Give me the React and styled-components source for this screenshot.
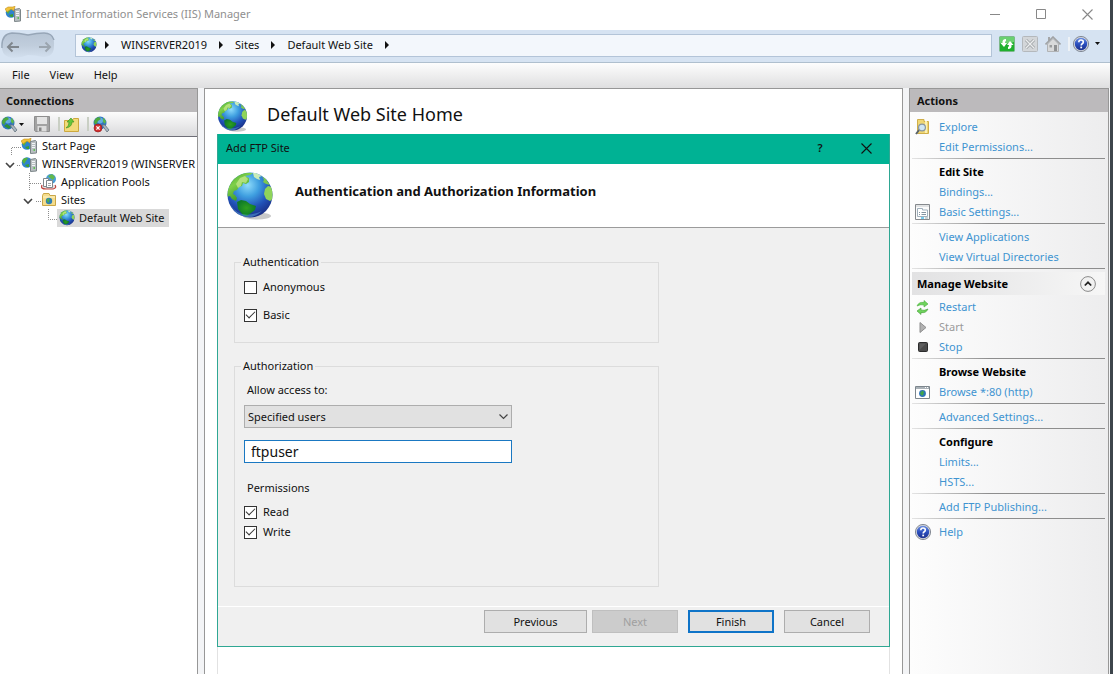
import React, { useId, useState } from "react";
import styled, { createGlobalStyle, css } from "styled-components";

const GlobalStyle = createGlobalStyle`
  *, *::before, *::after { box-sizing: border-box; }
  body { margin: 0; background: #f3f4f6; }
  body, button, input, select {
    font-family: "Noto Sans", "Open Sans", sans-serif;
    font-size: 11px;
    line-height: 16px;
    color: #111;
  }
  svg { display: block; flex: none; }
`;

/* ---------- drawings ---------- */

function Globe({ size = 16, shadow = false }) {
  const id = useId();
  return (
    <svg width={size} height={size} viewBox="0 0 48 48" aria-hidden="true">
      <defs>
        <radialGradient id={`${id}s`} cx="0.45" cy="0.28" r="0.72">
          <stop offset="0" stopColor="#8fdcfb" />
          <stop offset="0.35" stopColor="#3f9fe0" />
          <stop offset="0.7" stopColor="#2152b8" />
          <stop offset="1" stopColor="#1a2f86" />
        </radialGradient>
        <linearGradient id={`${id}g`} x1="0" y1="0" x2="0.6" y2="1">
          <stop offset="0" stopColor="#3c9c2c" />
          <stop offset="0.45" stopColor="#7fd04a" />
          <stop offset="1" stopColor="#2c8f22" />
        </linearGradient>
        <radialGradient id={`${id}b`}>
          <stop offset="0" stopColor="#2fa01f" />
          <stop offset="1" stopColor="#0f7a2a" />
        </radialGradient>
        <clipPath id={`${id}c`}><circle cx="24" cy="23" r="22.5" /></clipPath>
      </defs>
      {shadow && <ellipse cx="31" cy="44" rx="14" ry="3.5" fill="#777" opacity="0.4" />}
      <circle cx="24" cy="23" r="22.5" fill={`url(#${id}s)`} />
      <g clipPath={`url(#${id}c)`}>
        <path d="M0 25 L0 10 L14 0 L27 1 L24 3 L19 4 L23 6 L23 10 L20 12 L17 11 L16 14 L13 15 L11 18 L8 19 L7 22 L9 23 L11 26 L10 29 L6 27 L4 24 Z" fill={`url(#${id}g)`} />
        <path d="M14 6 L19 4 L22 7 L20 11 L16 10 L15 14 L12 16 L10 12 Z" fill="#c4e88c" opacity="0.75" />
        <path d="M27 1 L31 1 L36 4 L33 5 L34 8 L31 7 L28 5 Z" fill="#c8ecb8" />
        <path d="M36 4 L40 7 L44 13 L40 12 L37 10 L38 8 Z" fill="#7ec850" />
        <path d="M42 14 L46 15 L48 26 L44 29 L40 27 L38 22 L39 17 Z" fill="#8fd45a" />
        <path d="M11 30 L15 28 L20 29 L24 32 L30 34 L29 38 L25 41 L21 44 L17 43 L12 37 Z" fill={`url(#${id}b)`} />
        <path d="M4 32 Q14 49 36 39 Q27 47 18 46 Q8 41 4 32Z" fill="#78d8ff" opacity="0.35" />
      </g>
    </svg>
  );
}

function ServerGlobe({ star = false }) {
  return (
    <svg width="17" height="16" viewBox="0 0 17 16" aria-hidden="true">
      <circle cx="6" cy="6.5" r="5.3" fill="#2f83cf" />
      <path d="M1 5 Q3 1 7 2 L5 5 L3 8 Z" fill="#56b33e" />
      <path d="M4 9 L8 8 L8 11 L6 11 Z" fill="#3d9e33" />
      {star && <path d="M0 3 L3 1 L8 1 L10 0 L9 5 L6 3 L2 6 Z" fill="#f2c23a" stroke="#c4901f" strokeWidth="0.6" />}
      <path d="M9.5 3.5 L14.5 2.5 L15.5 3.5 V15 L9.5 15.5 Z" fill="#b9bfc2" stroke="#7c8588" />
      <path d="M11 5.5 H14 M11 7.5 H14 M11 9.5 H14" stroke="#f4f6f7" />
      <path d="M12.5 12 H14" stroke="#43c133" strokeWidth="1.5" />
    </svg>
  );
}

const AppPoolsIcon = () => (
  <svg width="16" height="16" viewBox="0 0 16 16" aria-hidden="true">
    <circle cx="10" cy="5" r="5" fill="#4a9fd8" />
    <path d="M7 2 L11 0 L14 3 L12 6 L9 4 Z" fill="#63b84c" />
    <path d="M1 11 Q-1 15 5 15 L12 15 Q16 14 14 11" fill="#e9e3e3" stroke="#c0453f" strokeWidth="1.2" />
    <path d="M2.5 4.5 H7.5 V12.5 H2.5 Z" fill="#fff" stroke="#80878c" />
    <path d="M5.5 6.5 H11.5 V13.5 H5.5 Z" fill="#fff" stroke="#80878c" />
    <path d="M7 9.5 H10 M7 11.5 H10" stroke="#a0a8ad" />
  </svg>
);

const SitesIcon = () => (
  <svg width="16" height="16" viewBox="0 0 16 16" aria-hidden="true">
    <path d="M1.5 3.5 L2.5 1.5 H8 L9 3.5 H14.5 V13.5 H1.5 Z" fill="#f4dc8c" stroke="#c9a646" />
    <path d="M2 5 H14" stroke="#fdf3c6" />
    <circle cx="8" cy="9" r="3.2" fill="#2f7fb5" />
    <path d="M5.5 8 L8 6 L8.5 9 L7 11 Z" fill="#4db04a" />
  </svg>
);

const ConnectIcon = ({ off = false }) => (
  <svg width="17" height="17" viewBox="0 0 17 17" aria-hidden="true">
    <circle cx="7" cy="7" r="6.5" fill="#2f74c4" />
    <circle cx="7" cy="4.5" r="3" fill="#7cc6ee" opacity="0.7" />
    <path d="M1 7 Q1 2 6 1 L8 3 L5 5 L3 9 Z" fill="#4ba83c" />
    <path d="M10 1.5 L13 5 L12 8 L10 6 Z" fill="#5cb848" />
    <path d="M9 9 L12 9 L16 14 L14 16 Z" fill="#aab6c0" stroke="#66747f" strokeWidth="0.8" />
    {off ? (
      <>
        <circle cx="5" cy="12" r="4" fill="#d22f2f" stroke="#8d1717" strokeWidth="0.6" />
        <path d="M3.4 10.4 L6.6 13.6 M6.6 10.4 L3.4 13.6" stroke="#fff" strokeWidth="1.3" />
      </>
    ) : (
      <path d="M3 10 L6 8 L10 11 L8 13 Z" fill="#2c8f38" />
    )}
  </svg>
);

const SaveIcon = () => (
  <svg width="16" height="16" viewBox="0 0 16 16" aria-hidden="true">
    <path d="M0.5 0.5 H15.5 V15.5 H1.5 L0.5 14.5 Z" fill="#a2a2a2" stroke="#8e8e8e" />
    <path d="M3 1 H13 V8 H3 Z" fill="#e4e4e4" />
    <path d="M3.5 10 H12.5 V15.5 H3.5 Z" fill="#dcdcdc" />
    <path d="M5 11.5 H7.5 V15 H5 Z" fill="#868686" />
  </svg>
);

const FolderUpIcon = () => (
  <svg width="15" height="15" viewBox="0 0 15 15" aria-hidden="true">
    <path d="M0.5 3.5 H8 L9.5 1.5 H14.5 V14.5 H0.5 Z" fill="#f3da7a" stroke="#cda83e" />
    <path d="M2 11 Q5 9 5 5 L3 5 L7 1 L10 5 L8 5 Q8 10 2 11Z" fill="#67c63a" stroke="#3b8f1d" strokeWidth="0.6" />
  </svg>
);

const ExploreIcon = () => (
  <svg width="15" height="16" viewBox="0 0 15 16" aria-hidden="true">
    <path d="M2.5 0.5 H9 V2.5 H13.5 V14.5 H2.5 Z" fill="#f0d774" stroke="#cfae4a" />
    <path d="M11 2 V14" stroke="#fbf0b4" strokeWidth="2" />
    <path d="M1 15 L4.5 10.5" stroke="#59636b" strokeWidth="2" />
    <circle cx="7" cy="8.5" r="3.4" fill="#cfe6f5" stroke="#8794a0" strokeWidth="1.2" />
  </svg>
);

const SettingsIcon = () => (
  <svg width="15" height="16" viewBox="0 0 15 16" aria-hidden="true">
    <path d="M0.5 0.5 H14.5 V15.5 H0.5 Z" fill="#fbfbfb" stroke="#85898d" />
    <path d="M1 2 H14" stroke="#c6cacd" />
    <path d="M2.5 4.5 H7.5 V6 H12.5 V12.5 H2.5 Z" fill="#fff" stroke="#a0b0bc" />
    <path d="M4 8.5 H5 M6.5 8.5 H11 M4 10.5 H5 M6.5 10.5 H11" stroke="#8494a0" />
    <path d="M6 14 H9" stroke="#3fb8e8" strokeWidth="1.4" />
    <path d="M10 14 H13" stroke="#9aa" />
  </svg>
);

const RestartIcon = () => (
  <svg width="13" height="15" viewBox="0 0 13 15" aria-hidden="true">
    <path d="M1 6 Q3 1.5 8 2.5 L8 0.5 L12 4 L8 7 L8 5 Q5 4 1 6Z" fill="#6fd45c" stroke="#4dae40" strokeWidth="0.6" />
    <path d="M12 9 Q10 13.5 5 12.5 L5 14.5 L1 11 L5 8 L5 10 Q8 11 12 9Z" fill="#6fd45c" stroke="#3f9c34" strokeWidth="0.6" />
  </svg>
);

const StartIcon = () => (
  <svg width="8" height="11" viewBox="0 0 8 11" aria-hidden="true">
    <path d="M1 0.5 L7 5.5 L1 10.5 Z" fill="#b2b2b2" stroke="#8e8e8e" />
  </svg>
);

const StopIcon = () => (
  <svg width="10" height="10" viewBox="0 0 10 10" aria-hidden="true">
    <rect x="0.5" y="0.5" width="9" height="9" rx="1" fill="#4b4b4b" stroke="#2c2c2c" />
    <path d="M1.5 8 L8 1.5 H1.5 Z" fill="#6a6a6a" opacity="0.6" />
  </svg>
);

const BrowseIcon = () => (
  <svg width="15" height="13" viewBox="0 0 15 13" aria-hidden="true">
    <path d="M0.5 0.5 H14.5 V12.5 H0.5 Z" fill="#fff" stroke="#7d868d" />
    <path d="M1 2 H14" stroke="#a9b1b7" strokeWidth="2" />
    <path d="M10 1.5 H11 M12 1.5 H13" stroke="#fff" />
    <circle cx="7.5" cy="7.5" r="3.4" fill="#2b72b8" />
    <path d="M5 7 L7.5 4.5 L9 6 L8 9.5 L6 9 Z" fill="#3fa54a" />
  </svg>
);

function HelpIcon() {
  const id = useId();
  return (
    <svg width="16" height="16" viewBox="0 0 16 16" aria-hidden="true">
      <defs>
        <linearGradient id={id} x1="0" y1="0" x2="0" y2="1">
          <stop offset="0" stopColor="#6d8fe0" />
          <stop offset="0.5" stopColor="#2a4fc0" />
          <stop offset="1" stopColor="#1b2f8c" />
        </linearGradient>
      </defs>
      <circle cx="8" cy="8" r="7.6" fill="#d4d8de" stroke="#6d7480" strokeWidth="0.8" />
      <circle cx="8" cy="8" r="6.2" fill={`url(#${id})`} />
      <path d="M5.8 6.2 Q5.8 4 8 4 Q10.3 4 10.3 6 Q10.3 7.1 9.2 7.8 Q8.2 8.4 8.2 9.4" fill="none" stroke="#fff" strokeWidth="1.6" />
      <rect x="7.3" y="10.6" width="1.8" height="1.7" fill="#fff" />
    </svg>
  );
}

const RefreshIcon = () => (
  <svg width="16" height="16" viewBox="0 0 16 16" aria-hidden="true">
    <rect x="0.5" y="0.5" width="15" height="15" rx="1" fill="#1fb02f" stroke="#7db88a" />
    <path d="M1 1 H15 V6 Q8 9 1 7 Z" fill="#9be89c" opacity="0.6" />
    <path d="M7 3 Q3 3 3.5 7 H1.5 L5 11 L8 7 H6 Q6 5 7 5 Z" fill="#fff" />
    <path d="M9 13 Q13 13 12.5 9 H14.5 L11 5 L8 9 H10 Q10 11 9 11 Z" fill="#fff" />
  </svg>
);

const StopLoadIcon = () => (
  <svg width="16" height="16" viewBox="0 0 16 16" aria-hidden="true">
    <rect x="0.5" y="0.5" width="15" height="15" rx="1" fill="#d3d6d9" stroke="#b4b8bc" />
    <path d="M4 4 L12 12 M12 4 L4 12" stroke="#9da1a5" strokeWidth="3" />
    <path d="M4 4 L12 12 M12 4 L4 12" stroke="#eceeef" strokeWidth="1.4" />
  </svg>
);

const HomeIcon = () => (
  <svg width="16" height="16" viewBox="0 0 16 16" aria-hidden="true">
    <path d="M3 1 H5 V4 L3 6 Z" fill="#a4a6a8" />
    <path d="M2.5 8 L8 2.5 L13.5 8 V15.5 H2.5 Z" fill="#d8d9da" stroke="#b1b3b5" />
    <path d="M0.5 8.5 L8 1 L15.5 8.5" fill="none" stroke="#a1a3a5" strokeWidth="1.6" />
    <path d="M9 9 H12 V15 H9 Z" fill="#8f9193" />
    <path d="M4.5 9 H7 V11.5 H4.5 Z" fill="#9a9c9e" />
  </svg>
);

function NavArrows() {
  const id = useId();
  return (
    <svg width="54" height="28" viewBox="0 0 54 28" aria-hidden="true">
      <defs>
        <linearGradient id={id} x1="0" y1="0" x2="0" y2="1">
          <stop offset="0" stopColor="#b7c5d5" />
          <stop offset="0.5" stopColor="#c0cddc" />
          <stop offset="1" stopColor="#d3e0ef" />
        </linearGradient>
      </defs>
      <path d="M1 18 Q0 3 11 2 Q18 2 27 4 Q36 2 43 2 Q54 3 53 15 Q53 26 42 26 Q34 24 27 24 Q20 27 12 27 Q2 26 1 18Z" fill={`url(#${id})`} />
      <path d="M1 17 Q0 3 11 2 Q18 2 27 4 Q36 2 43 2 Q51 2 53 9" fill="none" stroke="#97a6b7" strokeWidth="1.4" />
      <path d="M18 16 H7 M11.5 11.5 L7 16 L11.5 20.5" fill="none" stroke="#7f868d" strokeWidth="2" />
      <path d="M38 16 H49 M44.5 11.5 L49 16 L44.5 20.5" fill="none" stroke="#9ba5af" strokeWidth="2" />
    </svg>
  );
}

const CrumbArrow = () => (
  <svg width="4" height="8" viewBox="0 0 4 8" aria-hidden="true"><path d="M0 0 L4 4 L0 8 Z" fill="#111" /></svg>
);
const Caret = () => (
  <svg width="5" height="3" viewBox="0 0 5 3" aria-hidden="true"><path d="M0 0 H5 L2.5 3 Z" fill="#111" /></svg>
);
const Cross = ({ color = "#888" }) => (
  <svg width="11" height="11" viewBox="0 0 11 11" aria-hidden="true">
    <path d="M0.5 0.5 L10.5 10.5 M10.5 0.5 L0.5 10.5" stroke={color} strokeWidth="1.1" />
  </svg>
);

/* ---------- window frame ---------- */

const Frame = styled.div`
  min-height: 100vh;
  display: flex;
  flex-direction: column;
  border-right: 3px solid #3d454b;
  background: #f3f4f6;
`;

const TitleBar = styled.header`
  height: 30px;
  display: flex;
  align-items: center;
  padding: 0 0 2px 5px;
  gap: 4px;
  background: #fff;
  color: #8f8f8f;
`;

const WindowTitle = styled.h1`
  flex: 1;
  margin: 0;
  font-size: 11px;
  font-weight: 400;
`;

const CaptionButton = styled.button`
  width: 46px;
  height: 28px;
  padding: 0;
  border: 0;
  background: transparent;
  display: flex;
  align-items: center;
  justify-content: center;
  font-weight: 600;
`;

const Captions = styled.div`
  display: flex;
`;

const AddressBar = styled.nav`
  height: 33px;
  display: flex;
  align-items: center;
  padding: 0 10px 2px 1px;
  background: #d6e3f2;
  border-bottom: 1px solid #afbfce;
`;

const NavButtons = styled.div`
  width: 74px;
`;

const AddressField = styled.div`
  flex: 1;
  height: 23px;
  display: flex;
  align-items: center;
  gap: 8px;
  padding-left: 5px;
  margin-right: 7px;
  border: 1px solid #b3c4d8;
  background: #f3f7fc;
`;

const Crumbs = styled.div`
  display: flex;
  align-items: center;
  gap: 12px;
`;

const CrumbLink = styled.a`
  color: #111;
  text-decoration: none;
`;

const IconRow = styled.div`
  display: flex;
  align-items: center;
  gap: 7px;
  padding-bottom: 3px;
`;

const HelpGroup = styled.div`
  display: flex;
  align-items: center;
  gap: 3px;
`;

const IconButton = styled.button`
  display: flex;
  align-items: center;
  gap: ${(p) => p.$gap || 4}px;
  padding: 0;
  border: 0;
  background: transparent;
`;

const Divider = styled.span`
  width: 2px;
  height: 14px;
  margin-left: ${(p) => p.$lead || 0}px;
  background: ${(p) => p.$color || "#c9cfc4"};
`;

const MenuBar = styled.nav`
  height: 25px;
  display: flex;
  align-items: center;
  gap: 20px;
  padding: 0 0 2px 12px;
  background: linear-gradient(#fdfdfd, #dfdfe0);
`;

const MenuButton = styled.button`
  padding: 0;
  border: 0;
  background: transparent;
`;

const Panels = styled.div`
  flex: 1;
  display: grid;
  grid-template-columns: 198px minmax(0, 1fr) 200px;
  column-gap: 6px;
  padding-right: 1px;
`;

const Panel = styled.section`
  min-width: 0;
  border: 1px solid #979797;
  border-bottom: 0;
  background: #fff;
`;

const ConnectionsPanel = styled(Panel)`
  border-left: 0;
`;

const HomePanel = styled(Panel)`
  position: relative;
  display: flex;
  flex-direction: column;
  padding: 0 12px;
`;

const ActionsPanel = styled(Panel)`
  background: linear-gradient(to right, #fdfdfd, #ededee);
`;

const PanelHeader = styled.h2`
  height: 23px;
  margin: 0;
  padding-left: ${(p) => p.$inset}px;
  background: #bcbabc;
  font-size: 11px;
  font-weight: 700;
  line-height: 23px;
`;

/* ---------- connections ---------- */

const ToolStrip = styled.div`
  height: 25px;
  display: flex;
  align-items: center;
  gap: 4px;
  padding-left: 1px;
  background: linear-gradient(#fcfcfc, #dadadc);
  border-bottom: 1px solid #6f6f78;
`;

const Tree = styled.ul`
  margin: 0;
  padding: 0;
  list-style: none;
  overflow: hidden;
`;

const TreeRow = styled.li`
  height: 18px;
  display: flex;
  align-items: center;
  white-space: nowrap;
`;

const TreeLabel = styled.span`
  height: 18px;
  display: flex;
  align-items: center;
  gap: 4px;
  padding: ${(p) => (p.$selected ? "0 4px 0 2px" : "0")};
  background: ${(p) => (p.$selected ? "#d9d9d9" : "transparent")};
`;

const treeItems = [
  { label: "Start Page", icon: <ServerGlobe star />, width: 21, lines: "M11.5 18 V10.5 H21" },
  { label: "WINSERVER2019 (WINSERVER", icon: <ServerGlobe />, width: 21, lines: "M17 10.5 H21", chevron: 10 },
  { label: "Application Pools", icon: <AppPoolsIcon />, width: 41, lines: "M29.5 0 V18 M30 10.5 H41" },
  { label: "Sites", icon: <SitesIcon />, width: 41, lines: "M36 10.5 H41", chevron: 28 },
  { label: "Default Web Site", icon: <Globe size={16} />, width: 57, lines: "M48.5 0 V10.5 H57", selected: true },
];

const TreeGuide = ({ width, lines, chevron }) => (
  <svg width={width} height="18" viewBox={`0 0 ${width} 18`} aria-hidden="true">
    <path d={lines} fill="none" stroke="#8c8c8c" strokeDasharray="1 1" />
    {chevron && (
      <path d={`M${chevron - 4} 8 L${chevron} 12 L${chevron + 4} 8`} fill="none" stroke="#444" strokeWidth="1.6" />
    )}
  </svg>
);

function Connections() {
  return (
    <ConnectionsPanel>
      <PanelHeader $inset={6}>Connections</PanelHeader>
      <ToolStrip>
        <IconButton aria-label="Connect" $gap={1}><ConnectIcon /><Caret /></IconButton>
        <Divider $color="transparent" />
        <IconButton aria-label="Save"><SaveIcon /></IconButton>
        <Divider $lead={4} />
        <IconButton aria-label="Up"><FolderUpIcon /></IconButton>
        <Divider $lead={4} />
        <IconButton aria-label="Disconnect"><ConnectIcon off /></IconButton>
      </ToolStrip>
      <Tree>
        {treeItems.map((t) => (
          <TreeRow key={t.label}>
            <TreeGuide width={t.width} lines={t.lines} chevron={t.chevron} />
            <TreeLabel $selected={t.selected}>{t.icon}{t.label}</TreeLabel>
          </TreeRow>
        ))}
      </Tree>
    </ConnectionsPanel>
  );
}

/* ---------- home page behind the dialog ---------- */

const HomeHeader = styled.div`
  height: 45px;
  display: flex;
  align-items: center;
  gap: 19px;
  padding-top: 9px;
`;

const HomeTitle = styled.h2`
  margin: 0;
  font-size: 18px;
  line-height: 24px;
  font-weight: 400;
  padding-bottom: 4px;
`;

const FeatureView = styled.div`
  flex: 1;
  border: 1px solid #e2e2e2;
  border-bottom: 0;
`;

/* ---------- dialog ---------- */

const DialogBox = styled.div`
  position: absolute;
  top: 45px;
  left: 12px;
  right: 12px;
  border: 1px solid #2fa793;
  border-top: 0;
  background: #f0f0f0;
`;

const DialogTitle = styled.div`
  height: 30px;
  display: flex;
  align-items: center;
  padding: 0 0 2px 8px;
  background: #00b294;
`;

const DialogName = styled.span`
  flex: 1;
`;

const DialogHeader = styled.div`
  height: 64px;
  display: flex;
  align-items: center;
  gap: 21px;
  padding-left: 8px;
  background: #fff;
  border-bottom: 1px solid #9b9b9b;
`;

const DialogHeading = styled.h3`
  margin: 0;
  padding-bottom: 10px;
  font-size: 13px;
  font-weight: 700;
`;

const DialogBody = styled.div`
  display: flex;
  flex-direction: column;
  gap: 15px;
  padding: 26px 16px 19px;
`;

const Group = styled.fieldset`
  width: 425px;
  max-width: 100%;
  margin: 0;
  padding: ${(p) => p.$pad};
  border: 1px solid #dcdcdc;
`;

const Legend = styled.legend`
  margin-left: -3px;
  padding: 0 2px;
`;

const CheckRow = styled.label`
  height: ${(p) => p.$height}px;
  display: flex;
  align-items: center;
  gap: 6px;
`;

const tick = css`
  &:checked::after {
    content: "";
    width: 9px;
    height: 5px;
    margin-bottom: 3px;
    border: solid #333;
    border-width: 0 0 1px 1px;
    transform: rotate(-45deg);
  }
`;

const CheckBox = styled.input.attrs({ type: "checkbox" })`
  appearance: none;
  width: 13px;
  height: 13px;
  margin: 0;
  display: flex;
  align-items: center;
  justify-content: center;
  border: 1px solid #333;
  background: #fff;
  ${tick}
`;

const FieldLabel = styled.label`
  display: block;
  padding-left: 3px;
`;

const PermissionsLabel = styled.div`
  padding: 17px 0 6px 3px;
`;

const SelectWrap = styled.div`
  width: 268px;
  max-width: 100%;
  margin: 7px 0 12px;
  display: grid;
  align-items: center;

  & > * { grid-area: 1 / 1; }
  & > svg { justify-self: end; margin-right: 4px; pointer-events: none; }
`;

const Select = styled.select`
  appearance: none;
  width: 100%;
  height: 23px;
  padding: 0 20px 0 3px;
  border: 1px solid #adadad;
  border-radius: 0;
  background: #e1e1e1;
`;

const UserInput = styled.input`
  display: block;
  width: 268px;
  max-width: 100%;
  height: 23px;
  padding: 0 6px;
  border: 1px solid #1a78c2;
  background: #fff;
  font-size: 14px;
  outline: 0;
`;

const DialogFooter = styled.div`
  display: flex;
  justify-content: flex-end;
  gap: 10px;
  padding: 3px 19px 13px;
  border-top: 1px solid #fff;
`;

const StepButtons = styled.div`
  display: flex;
  gap: 5px;
`;

const PushButton = styled.button`
  width: ${(p) => p.$width || 86}px;
  height: 23px;
  padding: 0;
  border: ${(p) => (p.$primary ? "2px solid #0f74c8" : "1px solid #adadad")};
  background: #e1e1e1;

  &:disabled {
    border-color: #bfbfbf;
    background: #cccccc;
    color: #a0a0a0;
  }
`;

function Check({ children, checked = false, height }) {
  const [on, setOn] = useState(checked);
  return (
    <CheckRow $height={height}>
      <CheckBox checked={on} onChange={(e) => setOn(e.target.checked)} />
      {children}
    </CheckRow>
  );
}

function FtpDialog() {
  const [user, setUser] = useState("ftpuser");
  return (
    <DialogBox role="dialog" aria-label="Add FTP Site">
      <DialogTitle>
        <DialogName>Add FTP Site</DialogName>
        <CaptionButton aria-label="Help">?</CaptionButton>
        <CaptionButton aria-label="Close"><Cross color="#111" /></CaptionButton>
      </DialogTitle>
      <DialogHeader>
        <Globe size={48} shadow />
        <DialogHeading>Authentication and Authorization Information</DialogHeading>
      </DialogHeader>
      <DialogBody>
        <Group $pad="3px 9px 13px">
          <Legend>Authentication</Legend>
          <Check height={28}>Anonymous</Check>
          <Check height={28} checked>Basic</Check>
        </Group>
        <Group $pad="8px 9px 44px">
          <Legend>Authorization</Legend>
          <FieldLabel htmlFor="access">Allow access to:</FieldLabel>
          <SelectWrap>
            <Select id="access"><option>Specified users</option></Select>
            <svg width="9" height="6" viewBox="0 0 9 6" aria-hidden="true">
              <path d="M0.5 0.5 L4.5 4.5 L8.5 0.5" fill="none" stroke="#444" strokeWidth="1.2" />
            </svg>
          </SelectWrap>
          <UserInput aria-label="Users" value={user} onChange={(e) => setUser(e.target.value)} />
          <PermissionsLabel>Permissions</PermissionsLabel>
          <Check height={20} checked>Read</Check>
          <Check height={20} checked>Write</Check>
        </Group>
      </DialogBody>
      <DialogFooter>
        <StepButtons>
          <PushButton $width={103}>Previous</PushButton>
          <PushButton disabled>Next</PushButton>
        </StepButtons>
        <PushButton $primary>Finish</PushButton>
        <PushButton>Cancel</PushButton>
      </DialogFooter>
    </DialogBox>
  );
}

/* ---------- actions ---------- */

const ActionList = styled.div`
  padding: 5px 3px 0 2px;
`;

const ActionRow = styled.div`
  height: 20px;
  display: grid;
  grid-template-columns: 21px 1fr;
  column-gap: 6px;
  align-items: center;

  & > svg { justify-self: center; }
  & > :last-child { grid-column: 2; }
`;

const ActionLink = styled.a`
  color: #3f94d1;
  text-decoration: none;
`;

const ActionOff = styled.span`
  color: #9b9b9b;
`;

const ActionHeading = styled.strong`
  font-weight: 700;
  color: #000;
`;

const Rule = styled.hr`
  height: 1px;
  margin: 1px 0 3px;
  border: 0;
  background: linear-gradient(to right, #e4e4e4, #8d8d8d 40%);
`;

const ManageHeader = styled.div`
  height: 23px;
  display: flex;
  align-items: center;
  justify-content: space-between;
  padding: 0 9px 0 5px;
  margin-bottom: 2px;
  background: linear-gradient(to right, #e2e2e3, #f6f6f6);
`;

const actions = [
  { label: "Explore", icon: <ExploreIcon /> },
  { label: "Edit Permissions..." },
  { kind: "rule" },
  { kind: "heading", label: "Edit Site" },
  { label: "Bindings..." },
  { label: "Basic Settings...", icon: <SettingsIcon /> },
  { kind: "rule" },
  { label: "View Applications" },
  { label: "View Virtual Directories" },
  { kind: "rule" },
  { kind: "section", label: "Manage Website" },
  { label: "Restart", icon: <RestartIcon /> },
  { kind: "off", label: "Start", icon: <StartIcon /> },
  { label: "Stop", icon: <StopIcon /> },
  { kind: "rule" },
  { kind: "heading", label: "Browse Website" },
  { label: "Browse *:80 (http)", icon: <BrowseIcon /> },
  { kind: "rule" },
  { label: "Advanced Settings..." },
  { kind: "rule" },
  { kind: "heading", label: "Configure" },
  { label: "Limits..." },
  { label: "HSTS..." },
  { kind: "rule" },
  { label: "Add FTP Publishing..." },
  { kind: "rule" },
  { label: "Help", icon: <HelpIcon /> },
];

function Action({ kind, label, icon }) {
  if (kind === "rule") return <Rule />;
  if (kind === "section") {
    return (
      <ManageHeader>
        <ActionHeading>{label}</ActionHeading>
        <IconButton aria-label="Collapse">
          <svg width="16" height="16" viewBox="0 0 16 16" aria-hidden="true">
            <circle cx="8" cy="8" r="7.4" fill="#f1f1f1" stroke="#8b8b8b" />
            <path d="M4.8 9.5 L8 6.3 L11.2 9.5" fill="none" stroke="#222" strokeWidth="1.7" />
          </svg>
        </IconButton>
      </ManageHeader>
    );
  }
  return (
    <ActionRow>
      {icon}
      {kind === "heading" ? <ActionHeading>{label}</ActionHeading>
        : kind === "off" ? <ActionOff>{label}</ActionOff>
        : <ActionLink href="#">{label}</ActionLink>}
    </ActionRow>
  );
}

/* ---------- page ---------- */

export default function App() {
  return (
    <Frame>
      <GlobalStyle />
      <TitleBar>
        <ServerGlobe star />
        <WindowTitle>Internet Information Services (IIS) Manager</WindowTitle>
        <Captions>
          <CaptionButton aria-label="Minimize">
            <svg width="10" height="10" viewBox="0 0 10 10"><path d="M0 5.5 H10" stroke="#888" /></svg>
          </CaptionButton>
          <CaptionButton aria-label="Maximize">
            <svg width="10" height="10" viewBox="0 0 10 10"><path d="M0.5 0.5 H9.5 V9.5 H0.5 Z" fill="none" stroke="#888" /></svg>
          </CaptionButton>
          <CaptionButton aria-label="Close"><Cross /></CaptionButton>
        </Captions>
      </TitleBar>
      <AddressBar>
        <NavButtons><NavArrows /></NavButtons>
        <AddressField>
          <Globe size={16} />
          <Crumbs>
            <CrumbArrow />
            <CrumbLink href="#">WINSERVER2019</CrumbLink>
            <CrumbArrow />
            <CrumbLink href="#">Sites</CrumbLink>
            <CrumbArrow />
            <CrumbLink href="#">Default Web Site</CrumbLink>
            <CrumbArrow />
          </Crumbs>
        </AddressField>
        <IconRow>
          <IconButton aria-label="Refresh"><RefreshIcon /></IconButton>
          <IconButton aria-label="Stop"><StopLoadIcon /></IconButton>
          <IconButton aria-label="Home"><HomeIcon /></IconButton>
          <HelpGroup>
            <Divider $color="#eef2f6" />
            <IconButton aria-label="Help" $gap={6}><HelpIcon /><Caret /></IconButton>
          </HelpGroup>
        </IconRow>
      </AddressBar>
      <MenuBar>
        <MenuButton>File</MenuButton>
        <MenuButton>View</MenuButton>
        <MenuButton>Help</MenuButton>
      </MenuBar>
      <Panels>
        <Connections />
        <HomePanel>
          <HomeHeader>
            <Globe size={31} shadow />
            <HomeTitle>Default Web Site Home</HomeTitle>
          </HomeHeader>
          <FeatureView />
          <FtpDialog />
        </HomePanel>
        <ActionsPanel>
          <PanelHeader $inset={7}>Actions</PanelHeader>
          <ActionList>
            {actions.map((a, i) => <Action key={i} {...a} />)}
          </ActionList>
        </ActionsPanel>
      </Panels>
    </Frame>
  );
}
